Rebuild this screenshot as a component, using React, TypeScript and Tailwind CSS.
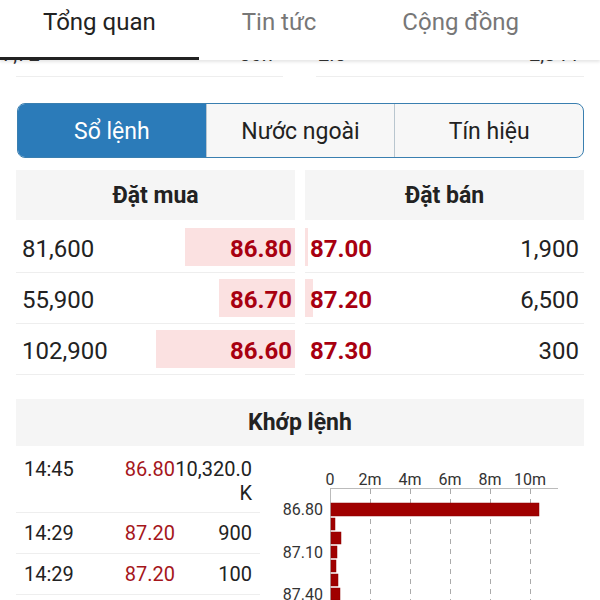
import React from 'react';

const tabs = [
  { label: 'Tổng quan', active: true },
  { label: 'Tin tức', active: false },
  { label: 'Cộng đồng', active: false },
];

const segments = ['Sổ lệnh', 'Nước ngoài', 'Tín hiệu'];

const orderBook = [
  { buyVol: '81,600', buyPrice: '86.80', buyBar: 110, sellPrice: '87.00', sellVol: '1,900', sellBar: 3 },
  { buyVol: '55,900', buyPrice: '86.70', buyBar: 76, sellPrice: '87.20', sellVol: '6,500', sellBar: 8 },
  { buyVol: '102,900', buyPrice: '86.60', buyBar: 139, sellPrice: '87.30', sellVol: '300', sellBar: 0 },
];

const trades = [
  { time: '14:45', price: '86.80', vol: ['10,320.0', 'K'] },
  { time: '14:29', price: '87.20', vol: ['900'] },
  { time: '14:29', price: '87.20', vol: ['100'] },
];

const bars = [
  { price: '86.80', w: 208 },
  { price: '86.90', w: 4 },
  { price: '87.00', w: 10 },
  { price: '87.10', w: 6 },
  { price: '87.20', w: 5 },
  { price: '87.30', w: 7 },
  { price: '87.40', w: 9 },
];

const VolumeChart = () => {
  const ticks = ['0', '2m', '4m', '6m', '8m', '10m'];
  return (
    <svg width="340" height="155" viewBox="0 0 340 155" className="block">
      {ticks.map((t, i) => (
        <text key={t} x={70 + i * 40} y={39} textAnchor="middle" fontSize="16" fill="#333" fontFamily="Roboto">
          {t}
        </text>
      ))}
      <line x1="70" y1="42.5" x2="298" y2="42.5" stroke="#bbb" strokeWidth="1" />
      <line x1="70.5" y1="42" x2="70.5" y2="155" stroke="#bbb" strokeWidth="1" />
      {[1, 2, 3, 4, 5].map((i) => (
        <line key={i} x1={70.5 + i * 40} y1="43" x2={70.5 + i * 40} y2="155" stroke="#aaa" strokeWidth="1" strokeDasharray="5 5" />
      ))}
      {bars.map((b, i) => {
        const y = i === 0 ? 57 : 58 + i * 14;
        return (
          <g key={b.price}>
            <rect x="71" y={y} width={b.w} height={i === 0 ? 13 : 12} fill="#a00000" stroke="#8a0000" strokeWidth="0.5" />
            {i % 3 === 0 && (
              <text x="63" y={y + (i === 0 ? 12 : 11.5)} textAnchor="end" fontSize="16" fill="#333" fontFamily="Roboto">
                {b.price}
              </text>
            )}
          </g>
        );
      })}
    </svg>
  );
};

export default function App() {
  return (
    <div className="w-[600px] h-[600px] overflow-hidden bg-white font-['Roboto',sans-serif] text-[#222]">
      {/* top tabs */}
      <div className="relative z-10 h-[60px] flex bg-white shadow-[0_2px_3px_rgba(0,0,0,0.10)]">
        {tabs.map((t) => (
          <div
            key={t.label}
            className={`px-[43px] pt-[7px] text-[24px] leading-[30px] ${
              t.active ? 'text-[#222] border-b-[3px] border-[#222]' : 'text-[#777]'
            }`}
          >
            {t.label}
          </div>
        ))}
      </div>

      {/* scrolled row, mostly hidden under the header */}
      <div className="h-[4px] overflow-hidden flex text-[20px] leading-[24px] text-[#333]">
        <div className="-mt-[18px] flex w-[300px] pl-[2px] pr-[22px] justify-between">
          <span>7,72</span>
          <span>56.7</span>
        </div>
        <div className="-mt-[18px] flex w-[300px] pl-[18px] pr-[22px] justify-between">
          <span>2.5</span>
          <span>2,344</span>
        </div>
      </div>

      <div className="px-[16px]">
        <div className="mt-[12px] flex justify-between">
          <div className="w-[267px] h-px bg-[#eee]" />
          <div className="w-[268px] h-px bg-[#eee]" />
        </div>

        {/* segmented control */}
        <div className="mt-[26px] ml-px h-[55px] flex rounded-[8px] border-[1.5px] border-[#3a7fb0] overflow-hidden bg-[#f7f7f7]">
          {segments.map((s, i) => (
            <div
              key={s}
              className={`flex-1 flex items-center justify-center pt-[3px] text-[23px] ${
                i === 0 ? 'bg-[#2b7bb9] text-white' : 'text-[#222] border-l border-[#b9c6cf]'
              }`}
            >
              {s}
            </div>
          ))}
        </div>

        {/* order book */}
        <div className="mt-[12px] grid grid-cols-2 gap-x-[10px]">
          <div className="h-[50px] pt-[3px] bg-[#f5f5f5] flex items-center justify-center font-bold text-[23px]">Đặt mua</div>
          <div className="h-[50px] pt-[3px] bg-[#f5f5f5] flex items-center justify-center font-bold text-[23px]">Đặt bán</div>
        </div>
        <div className="mt-[2px]">
          {orderBook.map((r) => (
            <div key={r.buyPrice} className="grid grid-cols-2 gap-x-[10px]">
              <div className="h-[51px] border-b border-[#eee] flex items-center justify-between">
                <span className="pl-[6px] pt-[4px] text-[24px]">{r.buyVol}</span>
                <div className="h-[38px] pt-[4px] flex items-center justify-end bg-[#fbe1e1]" style={{ width: r.buyBar }}>
                  <span className="pr-[3px] text-[24px] font-bold text-[#a80010] whitespace-nowrap">{r.buyPrice}</span>
                </div>
              </div>
              <div className="h-[51px] border-b border-[#eee] flex items-center">
                <div className="h-[38px] bg-[#fbe1e1] shrink-0" style={{ width: r.sellBar }} />
                <span className="pt-[4px] text-[24px] font-bold text-[#a80010]" style={{ marginLeft: 5 - r.sellBar }}>
                  {r.sellPrice}
                </span>
                <span className="ml-auto pt-[4px] pr-[5px] text-[24px]">{r.sellVol}</span>
              </div>
            </div>
          ))}
        </div>

        {/* matched orders */}
        <div className="mt-[24px] h-[47px] pt-[2px] bg-[#f5f5f5] flex items-center justify-center font-bold text-[23px]">
          Khớp lệnh
        </div>
      </div>

      <div className="flex">
        <div className="w-[260px] pl-[16px]">
          {trades.map((t, i) => (
            <div
              key={i}
              className={`grid grid-cols-[76px_75px_77px] px-[8px] border-b border-[#eee] text-[20px] leading-[24px] ${
                i === 0 ? 'pt-[11px] pb-[7px]' : 'py-[8px]'
              }`}
            >
              <span>{t.time}</span>
              <span className="text-right text-[#a5161b]">{t.price}</span>
              <span className="flex flex-col items-end">
                {t.vol.map((v) => (
                  <span key={v} className="whitespace-nowrap">
                    {v}
                  </span>
                ))}
              </span>
            </div>
          ))}
        </div>
        <VolumeChart />
      </div>
    </div>
  );
}
